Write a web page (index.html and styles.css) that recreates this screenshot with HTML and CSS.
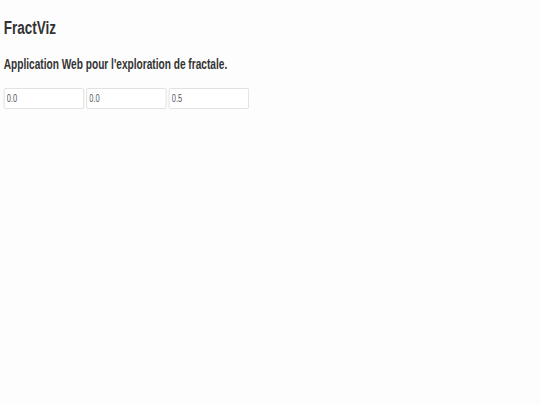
FILE: index.html
```html
<!DOCTYPE html>
<html lang="fr">
<head>
<meta charset="utf-8">
<title>FractViz</title>
<link rel="stylesheet" href="styles.css">
</head>
<body>
<div class="page">
  <h1 class="title">FractViz</h1>
  <h2 class="subtitle">Application Web pour l'exploration de fractale.</h2>
  <div class="controls">
    <input class="field" type="text" value="0.0">
    <input class="field" type="text" value="0.0">
    <input class="field" type="text" value="0.5">
  </div>
</div>
</body>
</html>
```

FILE: styles.css
```css
html, body {
  margin: 0;
  padding: 0;
  background: #fdfdfd;
}
body {
  width: 540px;
  height: 405px;
  overflow: hidden;
}
.page {
  width: 540px;
  transform: scaleX(0.75);
  transform-origin: 0 0;
  padding: 18px 5px 0 5px;
  box-sizing: border-box;
  font-family: "Liberation Sans", Arial, sans-serif;
  color: #333;
}
.title {
  margin: 0;
  font-size: 18px;
  font-weight: bold;
  line-height: 20px;
}
.subtitle {
  margin: 18px 0 0 0;
  font-size: 14px;
  font-weight: bold;
  line-height: 17px;
  transform: scaleX(0.965);
  transform-origin: 0 0;
}
.controls {
  display: flex;
  gap: 3px;
  margin-top: 15px;
}
.field {
  width: 107px;
  height: 21px;
  box-sizing: border-box;
  margin: 0;
  padding: 0 3px;
  border: 1px solid #ddd;
  border-radius: 2px;
  background: #fff;
  font-family: "Liberation Sans", Arial, sans-serif;
  font-size: 10px;
  color: #555;
  outline: none;
}
```
